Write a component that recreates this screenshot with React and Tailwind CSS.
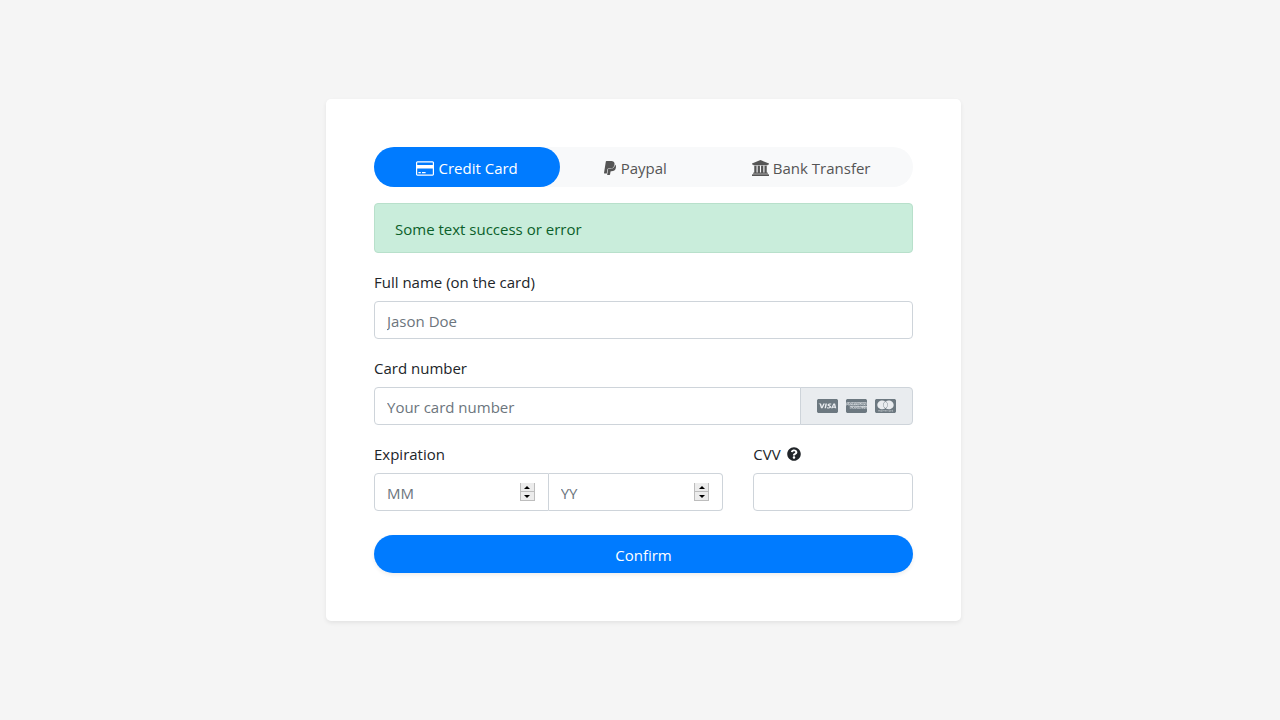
import React, { useRef, useState } from 'react';
import { FaPaypal, FaQuestionCircle, FaCcVisa, FaCcAmex, FaCcMastercard } from 'react-icons/fa';

const CreditCardIcon = ({ className }) => (
  <svg viewBox="0 0 1920 1792" fill="currentColor" aria-hidden="true" className={className}>
    <path d="M1760 128q66 0 113 47t47 113v1216q0 66-47 113t-113 47h-1600q-66 0-113-47t-47-113v-1216q0-66 47-113t113-47h1600zm-1600 128q-13 0-22.500 9.500t-9.500 22.500v224h1664v-224q0-13-9.500-22.500t-22.500-9.500h-1600zm1600 1280q13 0 22.500-9.500t9.500-22.500v-608h-1664v608q0 13 9.500 22.500t22.500 9.500h1600zm-1504-128v-128h256v128h-256zm384 0v-128h384v128h-384z" />
  </svg>
);

const BankIcon = ({ className }) => (
  <svg viewBox="0 0 1920 1792" fill="currentColor" aria-hidden="true" className={className}>
    <path d="M960 0l960 384v128h-128q0 26-20.500 45t-48.500 19h-1526q-28 0-48.500-19t-20.500-45h-128v-128zm-704 640h256v768h128v-768h256v768h128v-768h256v768h128v-768h256v768h59q28 0 48.500 19t20.500 45v64h-1664v-64q0-26 20.500-45t48.500-19h59v-768zm1595 960q28 0 48.500 19t20.500 45v128h-1920v-128q0-26 20.500-45t48.500-19h1782z" />
  </svg>
);

const tabs = [
  { id: 'card', label: 'Credit Card', icon: CreditCardIcon, iconClass: 'h-[17px] w-[18px]' },
  { id: 'paypal', label: 'Paypal', icon: FaPaypal, iconClass: 'h-4 w-[14px]' },
  { id: 'bank', label: 'Bank Transfer', icon: BankIcon, iconClass: 'h-4 w-[17px]' }
];

const cards = [
  { name: 'Visa', icon: FaCcVisa },
  { name: 'American Express', icon: FaCcAmex },
  { name: 'Mastercard', icon: FaCcMastercard }
];

const inputClass =
  'h-[38px] min-w-0 border border-[#ced4da] bg-white px-3 pt-0.5 text-[15px] text-[#495057] placeholder:text-[#6c757d] focus:outline-none focus:border-[#80bdff]';

const labelClass = 'mb-[7px] pt-px';

const NumberField = ({ label, placeholder, className }) => {
  const ref = useRef(null);

  return (
    <div className="relative flex-1">
      <input
        ref={ref}
        type="number"
        aria-label={label}
        placeholder={placeholder}
        className={`${inputClass} w-full [appearance:textfield] [&::-webkit-inner-spin-button]:appearance-none ${className}`}
      />
      {/* Stepper */}
      <div className="absolute inset-y-0 right-3.5 flex flex-col justify-center">
        <button
          type="button"
          aria-label={`Increase ${label}`}
          onClick={() => ref.current.stepUp()}
          className="flex h-[9px] w-[15px] items-center justify-center border-x border-b border-[#bdbdbd] bg-[#ececec]"
        >
          <svg viewBox="0 0 6 3" className="h-[3px] w-[6px]">
            <path d="M0 3L3 0l3 3z" fill="#000" />
          </svg>
        </button>
        <button
          type="button"
          aria-label={`Decrease ${label}`}
          onClick={() => ref.current.stepDown()}
          className="flex h-[9px] w-[15px] items-center justify-center border-x border-b border-[#bdbdbd] bg-[#ececec]"
        >
          <svg viewBox="0 0 6 3" className="h-[3px] w-[6px]">
            <path d="M0 0l3 3 3-3z" fill="#000" />
          </svg>
        </button>
      </div>
    </div>
  );
};

const App = () => {
  const [active, setActive] = useState('card');

  return (
    <div className="flex min-h-screen items-center justify-center bg-[#f5f5f5] pl-[7px] font-['Open_Sans','Segoe_UI',sans-serif] text-[15px] leading-6 text-[#212529]">
      <div className="w-full max-w-[635px] rounded-[5px] bg-white p-12 shadow-[0_2px_4px_rgba(0,0,0,0.075)]">
        {/* Payment method tabs */}
        <div role="tablist" className="mb-4 flex rounded-full bg-[#f8f9fa]">
          {tabs.map(({ id, label, icon: Icon, iconClass }) => (
            <button
              key={id}
              type="button"
              role="tab"
              aria-selected={active === id}
              onClick={() => setActive(id)}
              className={`flex flex-auto items-center justify-center gap-1 rounded-full px-4 pt-[9px] pb-[7px] ${
                active === id ? 'bg-[#007bff] text-white' : 'text-[#555]'
              }`}
            >
              <Icon className={iconClass} />
              {label}
            </button>
          ))}
        </div>

        <p role="alert" className="mb-4 rounded border border-[#b8e0cb] bg-[#c9eddb] px-5 pt-[13px] pb-[11px] text-[#0b602a]">
          Some text success or error
        </p>

        <form onSubmit={(e) => e.preventDefault()}>
          <div className="mb-4">
            <label htmlFor="username" className={`${labelClass} block`}>Full name (on the card)</label>
            <input id="username" type="text" placeholder="Jason Doe" className={`${inputClass} w-full rounded`} />
          </div>

          <div className="mb-4">
            <label htmlFor="cardNumber" className={`${labelClass} block`}>Card number</label>
            <div className="flex">
              <input
                id="cardNumber"
                type="text"
                placeholder="Your card number"
                className={`${inputClass} flex-1 rounded-l`}
              />
              <div className="-ml-px flex items-center gap-2 rounded-r border border-[#ced4da] bg-[#e9ecef] px-4 text-[#6c7880]">
                {cards.map(({ name, icon: Icon }) => (
                  <Icon key={name} aria-label={name} preserveAspectRatio="none" className="h-4 w-[21px]" />
                ))}
              </div>
            </div>
          </div>

          <div className="mb-6 grid grid-cols-12 gap-[30px]">
            <fieldset className="col-span-8">
              <legend className={labelClass}>Expiration</legend>
              <div className="flex">
                <NumberField label="Month" placeholder="MM" className="rounded-l" />
                <NumberField label="Year" placeholder="YY" className="rounded-r border-l-0" />
              </div>
            </fieldset>
            <div className="col-span-4">
              <label htmlFor="cvv" className={`${labelClass} flex items-center gap-1.5`}>
                CVV <FaQuestionCircle className="h-[14px] w-[14px]" />
              </label>
              <input id="cvv" type="text" className={`${inputClass} w-full rounded`} />
            </div>
          </div>

          <button
            type="submit"
            className="h-[38px] w-full rounded-full bg-[#007bff] pt-0.5 text-white shadow-[0_2px_4px_rgba(0,0,0,0.075)]"
          >
            Confirm
          </button>
        </form>
      </div>
    </div>
  );
};

export default App;
